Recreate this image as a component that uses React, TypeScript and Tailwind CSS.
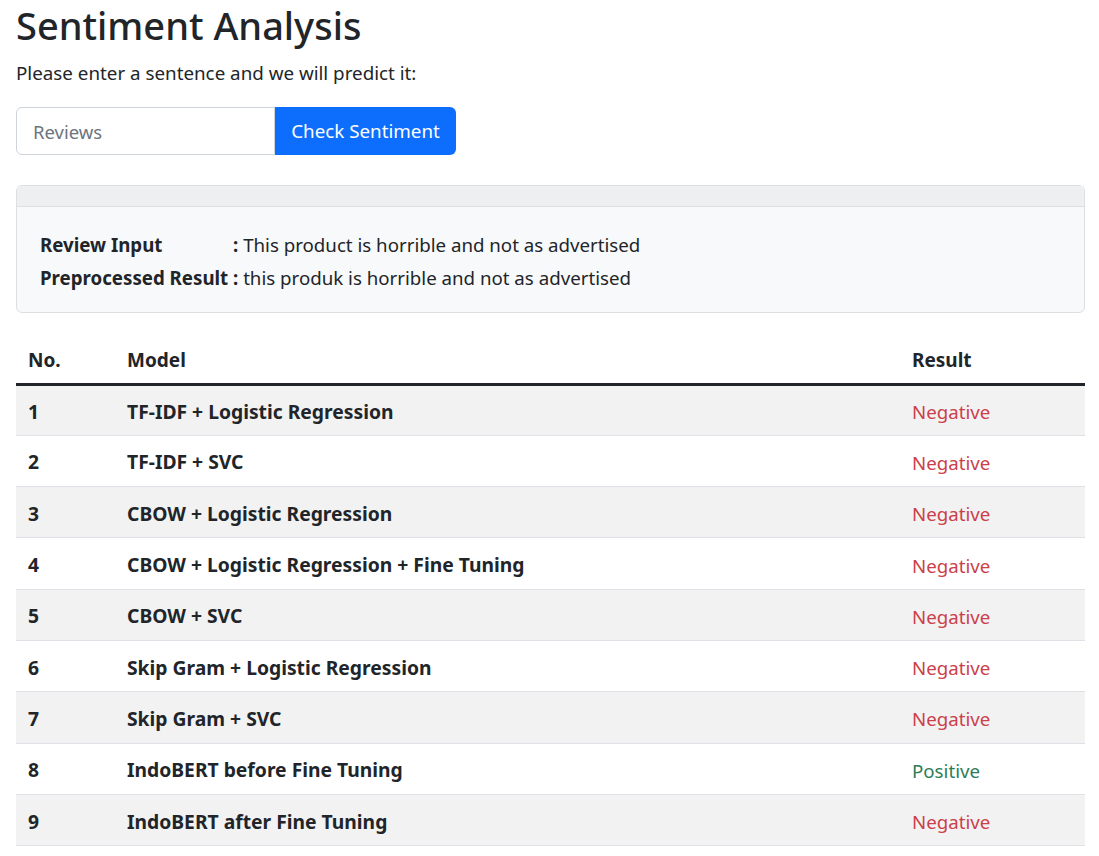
const rows = [
  { no: 1, model: 'TF-IDF + Logistic Regression', result: 'Negative' },
  { no: 2, model: 'TF-IDF + SVC', result: 'Negative' },
  { no: 3, model: 'CBOW + Logistic Regression', result: 'Negative' },
  { no: 4, model: 'CBOW + Logistic Regression + Fine Tuning', result: 'Negative' },
  { no: 5, model: 'CBOW + SVC', result: 'Negative' },
  { no: 6, model: 'Skip Gram + Logistic Regression', result: 'Negative' },
  { no: 7, model: 'Skip Gram + SVC', result: 'Negative' },
  { no: 8, model: 'IndoBERT before Fine Tuning', result: 'Positive' },
  { no: 9, model: 'IndoBERT after Fine Tuning', result: 'Negative' },
]

export default function App() {
  return (
    <div className="min-h-screen bg-white pl-4 pr-[14px] font-['Noto_Sans',sans-serif] text-[#212529]">
      <h1 className="text-[38px] font-medium leading-[50px]">Sentiment Analysis</h1>
      <p className="mt-[10px] text-[18.8px] leading-[27px]">Please enter a sentence and we will predict it:</p>

      <form className="mt-[20px] flex" onSubmit={e => e.preventDefault()}>
        <input
          type="text"
          placeholder="Reviews"
          className="h-[48px] w-[259px] rounded-l-[6px] border border-[#ced4da] px-4 text-[18.5px] placeholder:text-[#6c757d] outline-none"
        />
        <button className="h-[48px] w-[181px] rounded-r-[6px] bg-[#0d6efd] text-[18.8px] text-white">Check Sentiment</button>
      </form>

      <div className="mt-[30px] rounded-[6px] border border-[#dfdfdf] bg-[#f8f9fa]">
        <div className="h-[21px] border-b border-[#dfdfdf] bg-[#eeeff0]" />
        <div className="px-[23px] pb-[18px] pt-[21px] text-[18.7px] leading-[33px]">
          <div className="flex">
            <span className="w-[193px] whitespace-nowrap font-bold">Review Input</span>
            <span><b>: </b>This product is horrible and not as advertised</span>
          </div>
          <div className="flex">
            <span className="w-[193px] whitespace-nowrap font-bold">Preprocessed Result</span>
            <span><b>: </b>this produk is horrible and not as advertised</span>
          </div>
        </div>
      </div>

      <table className="mt-[20px] w-full border-collapse text-[18.7px]">
        <thead>
          <tr className="border-b-[3px] border-[#212529]">
            <th className="h-[51px] w-[99px] px-3 pt-[4px] text-left text-[19px] font-bold">No.</th>
            <th className="px-3 pt-[4px] text-left text-[19px] font-bold">Model</th>
            <th className="w-[185px] px-3 pt-[4px] text-left text-[19px] font-bold">Result</th>
          </tr>
        </thead>
        <tbody>
          {rows.map((r, i) => (
            <tr key={r.no} className={`border-b border-[#dee2e6] ${i % 2 === 0 ? 'bg-[#f2f2f2]' : 'bg-white'}`}>
              <td className="h-[51.3px] px-3 pt-[4px] text-[19.3px] font-bold">{r.no}</td>
              <td className="px-3 pt-[4px] text-[19.3px] font-bold">{r.model}</td>
              <td className={`px-3 pt-[4px] ${r.result === 'Positive' ? 'text-[#2e7d57]' : 'text-[#cc3f4a]'}`}>{r.result}</td>
            </tr>
          ))}
        </tbody>
      </table>
    </div>
  )
}
